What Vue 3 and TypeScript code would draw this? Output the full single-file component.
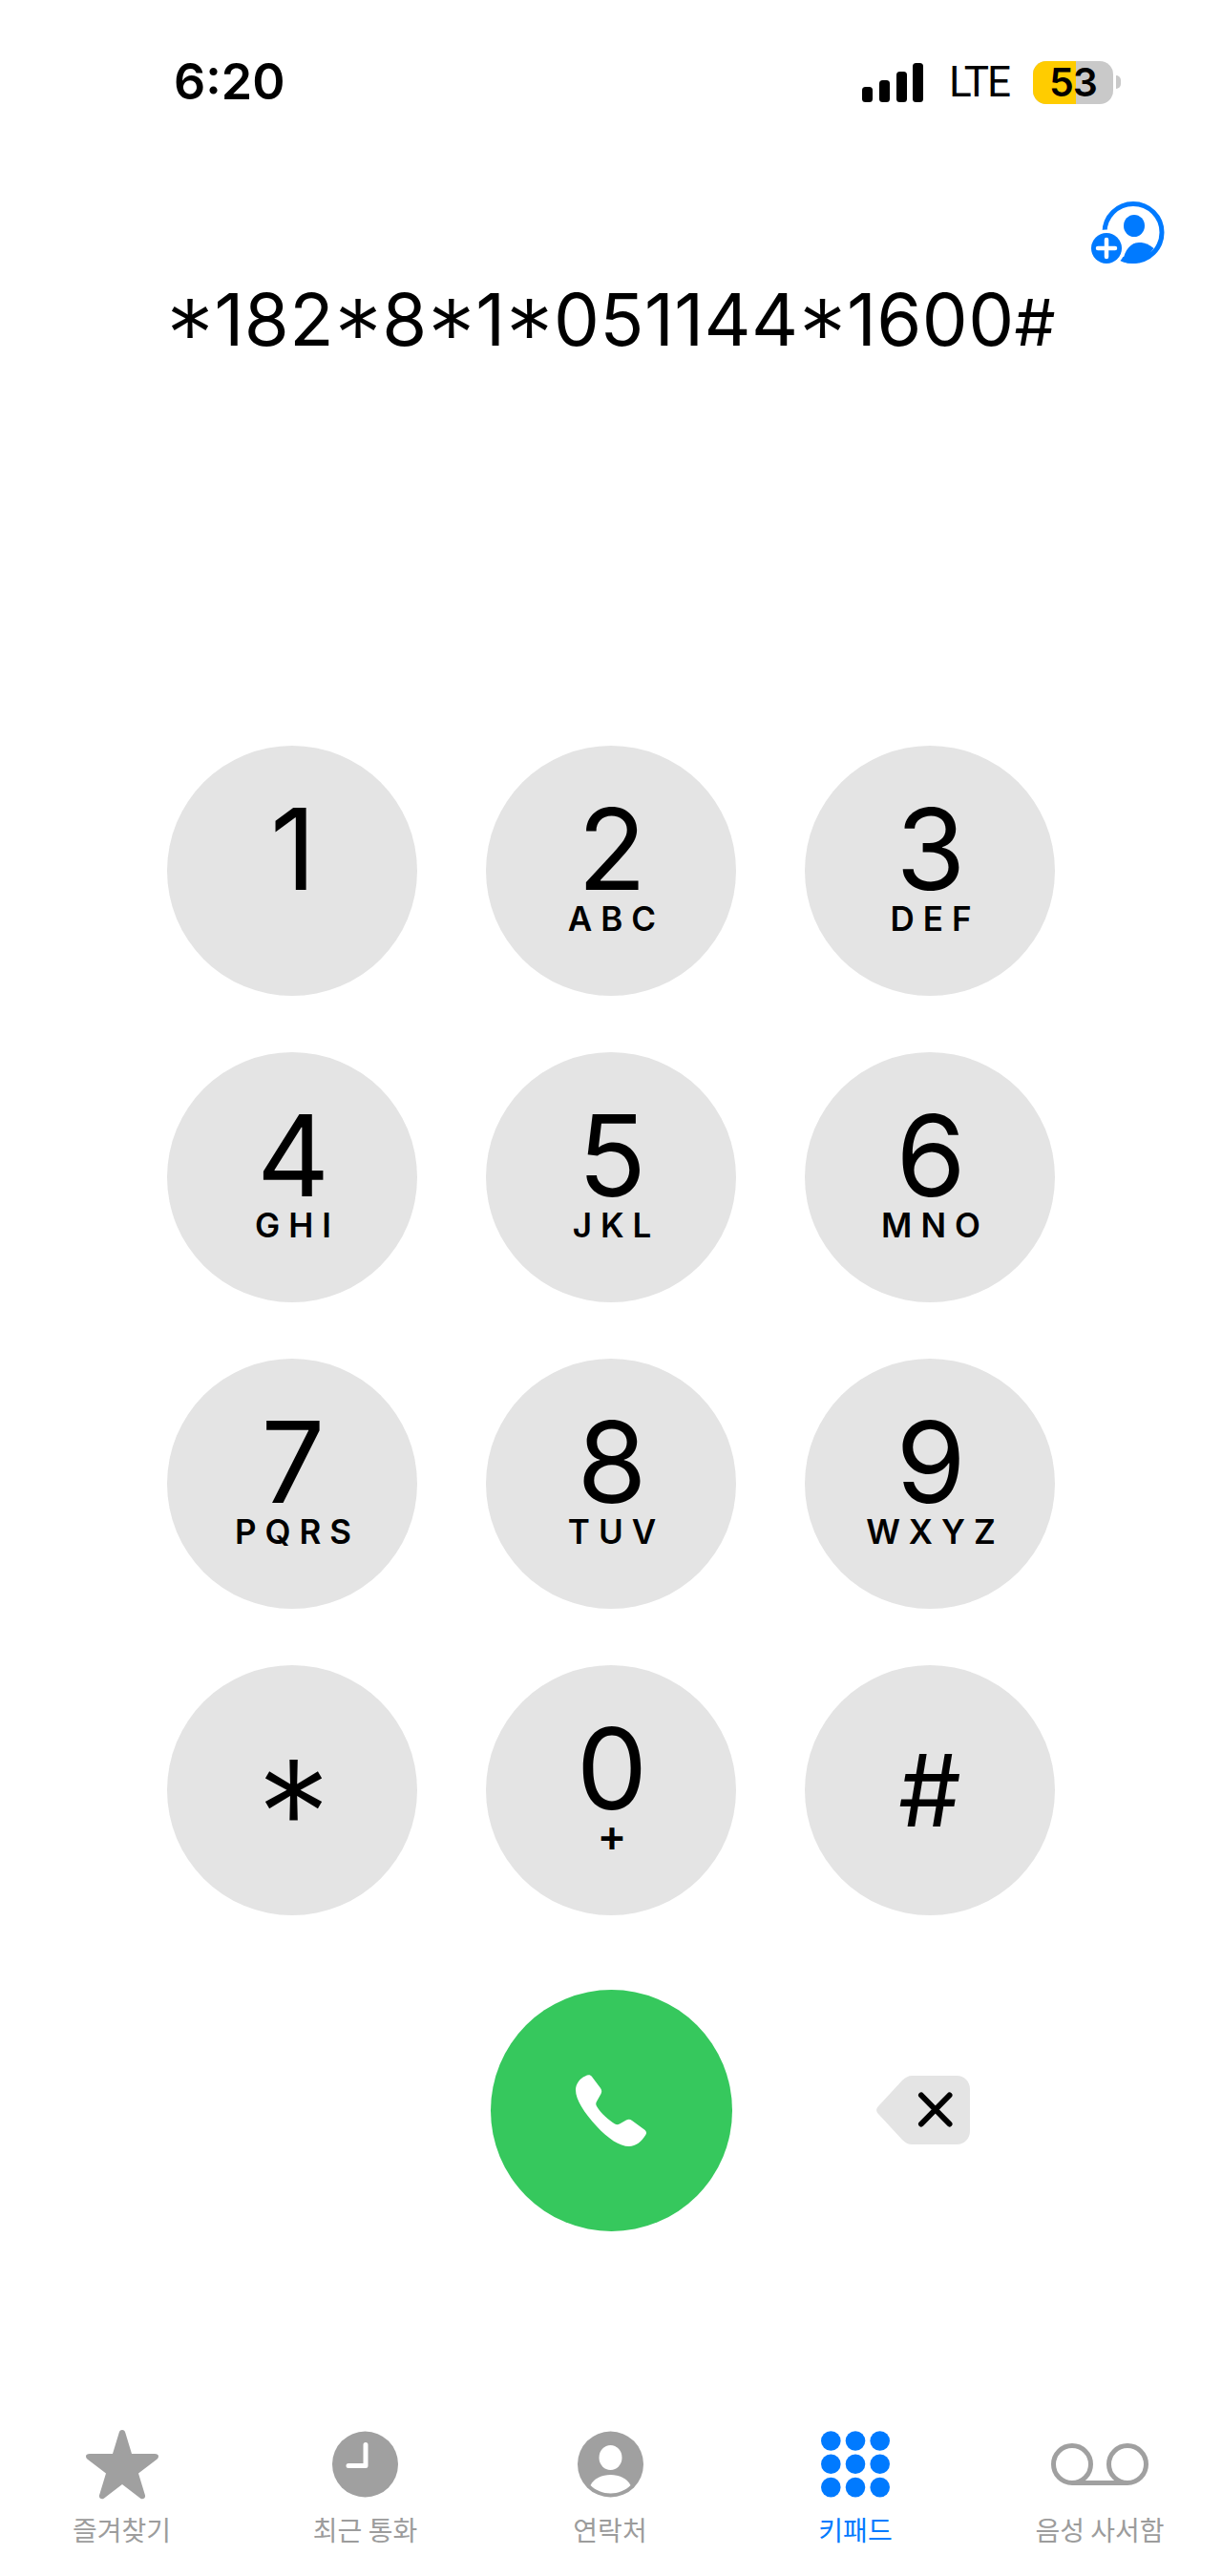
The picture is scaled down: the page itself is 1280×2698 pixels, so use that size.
<template>
  <div class="phone">
    <div class="status-bar">
      <span class="clock">6:20</span>
      <div class="status-right">
        <svg class="signal" width="64" height="41" viewBox="0 0 64 41">
          <rect x="0" y="25" width="11" height="16" rx="3.500" />
          <rect x="18" y="18" width="11" height="23" rx="3.500" />
          <rect x="36" y="9" width="11" height="32" rx="3.500" />
          <rect x="53" y="0" width="11" height="41" rx="3.500" />
        </svg>
        <span class="lte">LTE</span>
        <div class="battery">
          <div class="battery-body">
            <div class="battery-fill" :style="{ width: batteryLevel + '%' }"></div>
            <span class="battery-text">{{ batteryLevel }}</span>
          </div>
          <div class="battery-cap"></div>
        </div>
      </div>
    </div>

    <div class="number-area">
      <div class="number">
        <span
          v-for="(char, index) in dialed"
          :key="index"
          :class="{ 'num-star': char === '*', 'num-hash': char === '#' }"
        >{{ char }}</span>
      </div>
      <svg class="add-contact" width="84" height="72" viewBox="0 0 84 72">
        <circle cx="47" cy="35.500" r="30" fill="none" stroke="#007aff" stroke-width="5" />
        <ellipse cx="48" cy="28.500" rx="11" ry="11.500" fill="#007aff" />
        <path d="M36 66c2-13 9-20 17-20 6 0 11 2 15.500 6C63 60 55 68 47 68c-4 0-8-.7-11-2z" fill="#007aff" />
        <circle cx="19" cy="52" r="19.500" fill="#fff" />
        <circle cx="19" cy="52" r="16" fill="#007aff" />
        <path d="M19 43v18M10 52h18" stroke="#fff" stroke-width="4.500" stroke-linecap="round" />
      </svg>
    </div>

    <div class="keypad">
      <button
        v-for="key in keys"
        :key="key.digit"
        type="button"
        class="key"
        :class="{ 'key-star': key.digit === '*', 'key-hash': key.digit === '#' }"
      >
        <span class="digit">{{ key.digit }}</span>
        <span v-if="key.letters" class="letters" :class="{ plus: key.digit === '0' }">{{ key.letters }}</span>
      </button>
    </div>

    <div class="call-row">
      <button type="button" class="call">
        <svg width="74" height="75" viewBox="0 0 74 75">
          <path
            fill="#fff"
            d="M10 1.500C13-.5 15.500 0 17 2l9 12c1.500 2 1.500 4 .5 6L22 28c-1 2-1 3 0 5 5 8 12 14 19 18.500 2 1 3 1 5 0l7-4c2-1 4-1 6 .5l13 9.500c2.500 2 2.500 4 1 6C69 70 63 75 56 75 46 75 34 67 22 54 9 40 0 26 0 16 0 10 4 4 10 1.500z"
          />
        </svg>
      </button>
      <button type="button" class="backspace">
        <svg width="98" height="72" viewBox="0 0 98 72">
          <path
            fill="#e4e4e4"
            d="M27 5c3-3 6-5 11-5h46c8 0 14 6 14 14v44c0 8-6 14-14 14H38c-5 0-8-2-11-5L2 40c-2.500-2.500-2.500-5.500 0-8z"
          />
          <path d="M47 20.500l29.500 30M76.500 20.500L47 50.500" stroke="#000" stroke-width="6" stroke-linecap="round" />
        </svg>
      </button>
    </div>

    <nav class="tab-bar">
      <div v-for="tab in tabs" :key="tab.label" class="tab" :class="{ active: tab.active }">
        <div class="tab-icon">
          <svg v-if="tab.icon === 'star'" width="76" height="73" viewBox="0 0 76 73">
            <path
              fill="#a0a0a0"
              d="M38 0c1.800 0 2.800 1.200 3.400 3.200L48 25h24c2.600 0 4 1 4 2.800 0 1.200-.7 2.200-2 3.300L55 45.500l7 23c.7 2.600-2.300 5-4.800 3.200L38 57 18.800 71.700c-2.500 1.800-5.500-.6-4.800-3.200l7-23L2 31.100C.7 30 0 29 0 27.800 0 26 1.400 25 4 25h24l6.600-21.800C35.200 1.200 36.200 0 38 0z"
            />
          </svg>
          <svg v-else-if="tab.icon === 'clock'" width="69" height="70" viewBox="0 0 69 70">
            <circle cx="34.500" cy="35" r="34.500" fill="#a0a0a0" />
            <path d="M35 14.500v22H17" fill="none" stroke="#fff" stroke-width="5" stroke-linecap="round" stroke-linejoin="round" />
          </svg>
          <svg v-else-if="tab.icon === 'contact'" width="69" height="70" viewBox="0 0 69 70">
            <circle cx="34.500" cy="35" r="34.500" fill="#a0a0a0" />
            <ellipse cx="34.500" cy="28" rx="12" ry="13" fill="#fff" />
            <path d="M13.500 57c4-7.500 12-11 21-11s17 3.500 21 11c-5.500 5.500-13 8.500-21 8.500s-15.500-3-21-8.500z" fill="#fff" />
          </svg>
          <svg v-else-if="tab.icon === 'keypad'" width="72" height="70" viewBox="0 0 72 70">
            <template v-for="row in 3" :key="row">
              <circle v-for="col in 3" :key="col" :cx="10.300 + (col - 1) * 25.700" :cy="10.500 + (row - 1) * 24.300" r="10.300" fill="#007aff" />
            </template>
          </svg>
          <svg v-else width="102" height="44" viewBox="0 0 102 44">
            <circle cx="22" cy="22" r="19.500" fill="none" stroke="#a0a0a0" stroke-width="5" />
            <circle cx="80" cy="22" r="19.500" fill="none" stroke="#a0a0a0" stroke-width="5" />
            <path d="M22 41.500h58" fill="none" stroke="#a0a0a0" stroke-width="5" />
          </svg>
        </div>
        <span class="tab-label">{{ tab.label }}</span>
      </div>
    </nav>
  </div>
</template>

<script setup lang="ts">
interface DialKey {
  digit: string
  letters?: string
}

interface Tab {
  label: string
  icon: 'star' | 'clock' | 'contact' | 'keypad' | 'voicemail'
  active?: boolean
}

const batteryLevel = 53

const dialed = '*182*8*1*051144*1600#'.split('')

const keys: DialKey[] = [
  { digit: '1' },
  { digit: '2', letters: 'ABC' },
  { digit: '3', letters: 'DEF' },
  { digit: '4', letters: 'GHI' },
  { digit: '5', letters: 'JKL' },
  { digit: '6', letters: 'MNO' },
  { digit: '7', letters: 'PQRS' },
  { digit: '8', letters: 'TUV' },
  { digit: '9', letters: 'WXYZ' },
  { digit: '*' },
  { digit: '0', letters: '+' },
  { digit: '#' },
]

const tabs: Tab[] = [
  { label: '즐겨찾기', icon: 'star' },
  { label: '최근 통화', icon: 'clock' },
  { label: '연락처', icon: 'contact' },
  { label: '키패드', icon: 'keypad', active: true },
  { label: '음성 사서함', icon: 'voicemail' },
]
</script>

<style>
html,
body {
  background: #fff;
}
</style>

<style scoped>
.phone {
  width: 1280px;
  height: 2698px;
  display: flex;
  flex-direction: column;
  background: #fff;
  color: #000;
  font-family: Inter, 'Liberation Sans', 'Noto Sans CJK KR', sans-serif;
  overflow: hidden;
}

.status-bar {
  height: 170px;
  padding: 60px 106px 0 182px;
  box-sizing: border-box;
  display: flex;
  justify-content: space-between;
  align-items: flex-start;
  flex-shrink: 0;
}

.clock {
  font-size: 52px;
  font-weight: 600;
  line-height: 52px;
}

.status-right {
  display: flex;
  align-items: center;
  height: 52px;
}

.signal {
  fill: #000;
}

.lte {
  width: 60px;
  margin: 0 28px 0 27px;
  font-family: Roboto, 'Liberation Sans', sans-serif;
  font-size: 44px;
  font-weight: 400;
  line-height: 44px;
  letter-spacing: -2px;
  white-space: nowrap;
}

.battery {
  display: flex;
  align-items: center;
  gap: 3px;
}

.battery-body {
  position: relative;
  width: 84px;
  height: 45px;
  border-radius: 14px;
  background: #c9c9c9;
  display: flex;
  align-items: center;
  justify-content: center;
}

.battery-fill {
  position: absolute;
  left: 0;
  top: 0;
  bottom: 0;
  border-radius: 14px 0 0 14px;
  background: #ffcc00;
}

.battery-text {
  position: relative;
  font-size: 41px;
  font-weight: 600;
  line-height: 1;
  letter-spacing: -1px;
}

.battery-cap {
  width: 5px;
  height: 14px;
  border-radius: 0 5px 5px 0;
  background: #c9c9c9;
}

.number-area {
  position: relative;
  height: 611px;
  flex-shrink: 0;
  text-align: center;
}

.number {
  padding-top: 118px;
  font-size: 76px;
  line-height: 92px;
  letter-spacing: 0.4px;
  white-space: nowrap;
}

.num-star {
  font-size: 100px;
  font-weight: 300;
  line-height: 0;
  vertical-align: -24px;
}

.num-hash {
  font-size: 68px;
  line-height: 0;
}

.add-contact {
  position: absolute;
  left: 1140px;
  top: 38px;
}

.keypad {
  margin-left: 175px;
  display: grid;
  grid-template-columns: repeat(3, 262px);
  grid-auto-rows: 262px;
  column-gap: 72px;
  row-gap: 59px;
  flex-shrink: 0;
}

.key {
  width: 262px;
  height: 262px;
  padding: 58px 0 0 2px;
  box-sizing: border-box;
  border: none;
  border-radius: 50%;
  background: #e4e4e4;
  color: #000;
  font-family: inherit;
  display: flex;
  flex-direction: column;
  align-items: center;
}

.digit {
  font-size: 118px;
  line-height: 100px;
}

.letters {
  margin-top: 5px;
  padding-left: 9px;
  font-size: 35px;
  font-weight: 600;
  line-height: 36px;
  letter-spacing: 9px;
}

.letters.plus {
  margin-top: 2px;
  padding-left: 0;
  font-size: 46px;
  letter-spacing: 0;
}

.key-star,
.key-hash {
  justify-content: center;
  padding: 0;
}

.key-star .digit {
  padding: 50px 0 0 3px;
  font-size: 155px;
  font-weight: 300;
}

.key-hash .digit {
  font-size: 104px;
}

.call-row {
  position: relative;
  margin-top: 78px;
  height: 253px;
  flex-shrink: 0;
  display: flex;
  justify-content: center;
}

.call {
  width: 253px;
  height: 253px;
  padding: 0;
  border: none;
  border-radius: 50%;
  background: #36c85d;
  display: flex;
  align-items: center;
  justify-content: center;
}

.backspace {
  position: absolute;
  left: 918px;
  top: 90px;
  padding: 0;
  border: none;
  background: none;
  line-height: 0;
}

.tab-bar {
  margin-top: 206px;
  display: grid;
  grid-template-columns: 255px 255px 258px 256px 256px;
  flex-shrink: 0;
}

.tab {
  display: flex;
  flex-direction: column;
  align-items: center;
  color: #9c9c9c;
}

.tab.active {
  color: #007aff;
}

.tab-icon {
  height: 76px;
  display: flex;
  align-items: center;
  justify-content: center;
}

.tab-label {
  margin-top: 12px;
  font-family: 'Noto Sans CJK KR', sans-serif;
  font-size: 28px;
  line-height: 36px;
  white-space: nowrap;
}
</style>
